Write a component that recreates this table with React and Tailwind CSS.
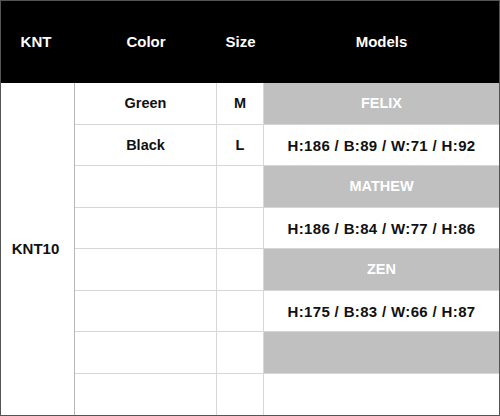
import React from 'react';

const rows = [
  { color: 'Green', size: 'M', model: 'FELIX', grey: true },
  { color: 'Black', size: 'L', model: 'H:186 / B:89 / W:71 / H:92' },
  { color: '', size: '', model: 'MATHEW', grey: true },
  { color: '', size: '', model: 'H:186 / B:84 / W:77 / H:86' },
  { color: '', size: '', model: 'ZEN', grey: true },
  { color: '', size: '', model: 'H:175 / B:83 / W:66 / H:87' },
  { color: '', size: '', model: '', grey: true },
  { color: '', size: '', model: '' },
];

export default function App() {
  return (
    <div className="w-[500px] h-[416px] bg-white" style={{ fontFamily: '"Liberation Sans", Arial, sans-serif' }}>
      <div className="w-full h-full border border-[#555] grid grid-cols-[74px_142px_47px_1fr] grid-rows-[82px_repeat(8,1fr)] font-bold text-[14.5px] text-[#111]">
        {/* Header */}
        <div className="bg-black text-white text-[15px] flex items-center justify-center pr-1">KNT</div>
        <div className="bg-black text-white text-[15px] flex items-center justify-center">Color</div>
        <div className="bg-black text-white text-[15px] flex items-center justify-center">Size</div>
        <div className="bg-black text-white text-[15px] flex items-center justify-center">Models</div>

        {/* Body */}
        <div className="row-span-8 border-r border-[#b8b8b8] text-[15px] flex items-center justify-center pr-1">KNT10</div>
        {rows.map((r, i) => {
          const last = i === rows.length - 1;
          return (
            <React.Fragment key={i}>
              <div className={`${last ? '' : 'border-b'} border-r border-[#d6d6d6] flex items-center justify-center pt-0.5`}>
                {r.color}
              </div>
              <div className={`${last ? '' : 'border-b'} border-r border-[#d6d6d6] flex items-center justify-center pt-0.5`}>
                {r.size}
              </div>
              <div
                className={`${last ? '' : 'border-b'} border-[#d6d6d6] flex items-center justify-center pt-0.5 ${
                  r.grey ? 'bg-[#c0c0c0] text-white' : 'text-[15px] tracking-[0.35px]'
                }`}
              >
                {r.model}
              </div>
            </React.Fragment>
          );
        })}
      </div>
    </div>
  );
}
